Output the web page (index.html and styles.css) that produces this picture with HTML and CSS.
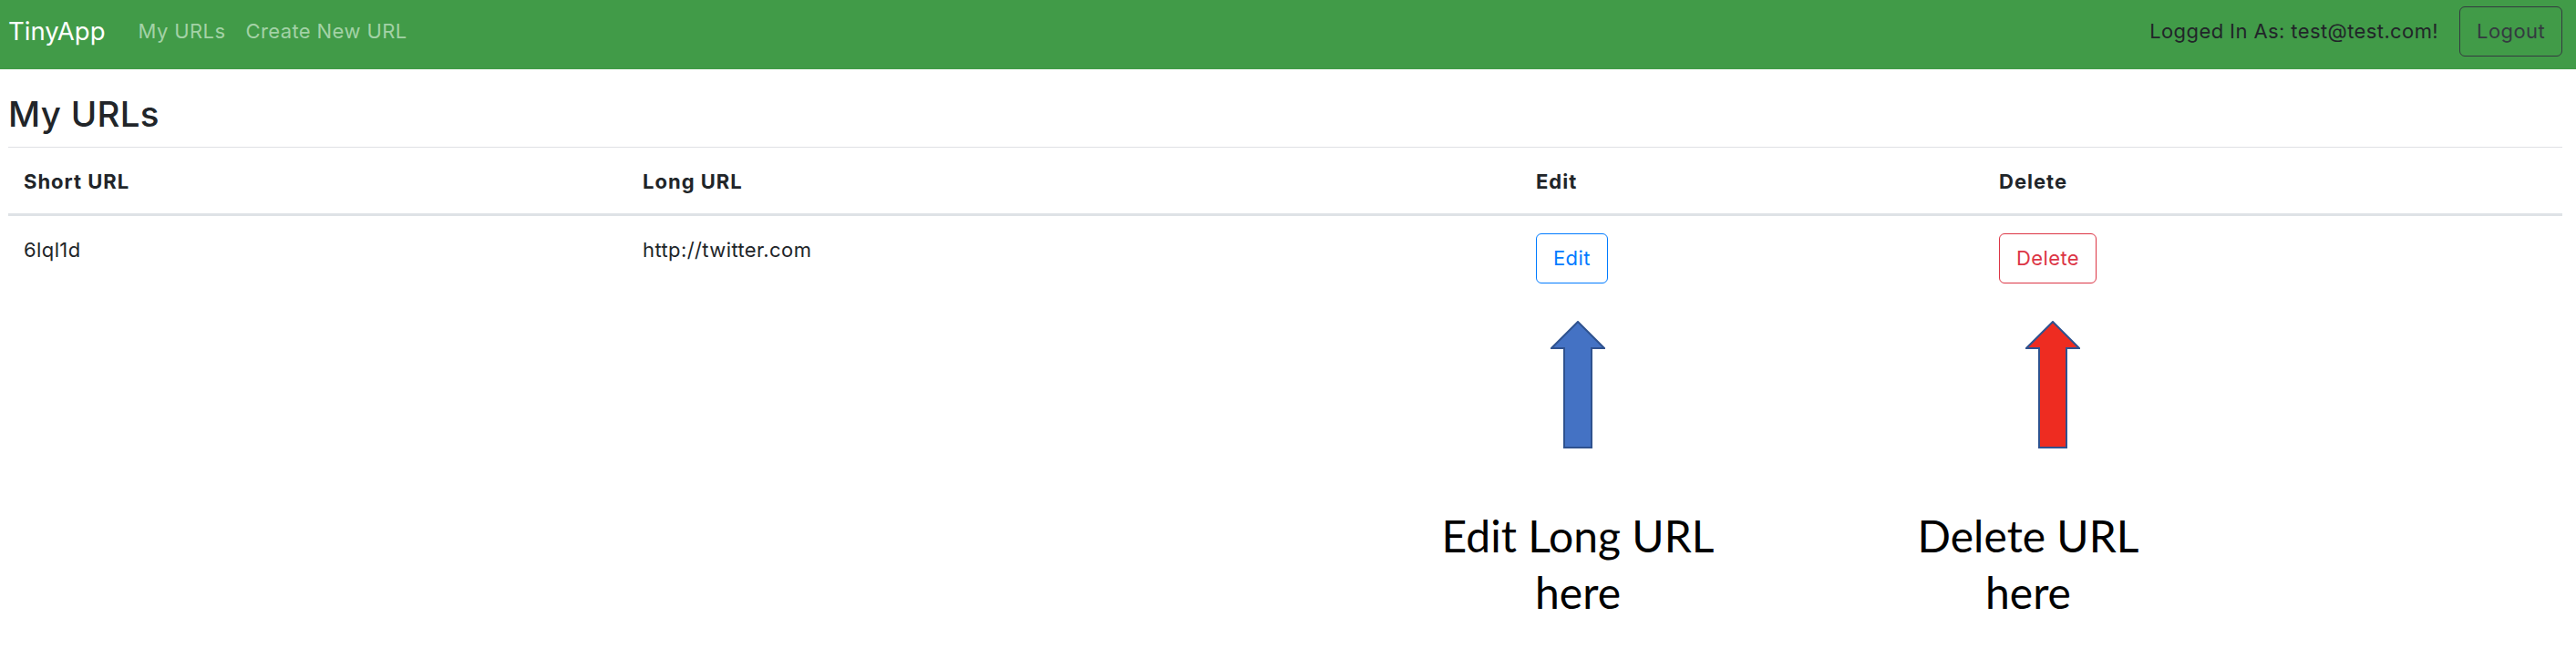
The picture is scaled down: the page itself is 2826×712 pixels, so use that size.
FILE: index.html
```html
<!DOCTYPE html>
<html lang="en">
<head>
<meta charset="utf-8">
<title>TinyApp - My URLs</title>
<link rel="stylesheet" href="styles.css">
</head>
<body>
<nav class="navbar">
  <a class="brand" href="#">TinyApp</a>
  <ul class="nav-links">
    <li><a class="nav-link" href="#">My URLs</a></li>
    <li><a class="nav-link" href="#">Create New URL</a></li>
  </ul>
  <div class="nav-right">
    <span class="nav-text">Logged In As: test@test.com!</span>
    <button class="btn btn-outline-dark">Logout</button>
  </div>
</nav>
<main class="main">
  <h3 class="page-title">My URLs</h3>
  <hr class="divider">
  <table class="url-table">
    <colgroup>
      <col class="c1"><col class="c2"><col class="c3"><col class="c4">
    </colgroup>
    <thead>
      <tr><th>Short URL</th><th>Long URL</th><th>Edit</th><th>Delete</th></tr>
    </thead>
    <tbody>
      <tr>
        <td>6lql1d</td>
        <td>http://twitter.com</td>
        <td class="btn-cell"><button class="btn btn-outline-primary">Edit</button></td>
        <td class="btn-cell"><button class="btn btn-outline-danger">Delete</button></td>
      </tr>
    </tbody>
  </table>
  <div class="annotations">
    <div class="note note-edit">
      <svg class="arrow" width="60" height="140" viewBox="0 0 60 140" aria-hidden="true">
        <polygon points="30,1 59,30 45,30 45,139 15,139 15,30 1,30" fill="#4472c4" stroke="#2f528f" stroke-width="2" stroke-linejoin="miter"/>
      </svg>
      <p class="note-text">Edit Long URL<br>here</p>
    </div>
    <div class="note note-delete">
      <svg class="arrow arrow-shift" width="60" height="140" viewBox="0 0 60 140" aria-hidden="true">
        <polygon points="30,1 59,30 45,30 45,139 15,139 15,30 1,30" fill="#ee2c21" stroke="#2f528f" stroke-width="2" stroke-linejoin="miter"/>
      </svg>
      <p class="note-text">Delete URL<br>here</p>
    </div>
  </div>
</main>
</body>
</html>
```

FILE: styles.css
```css
html, body {
  margin: 0;
  padding: 0;
  background: #ffffff;
}

body {
  font-family: Inter, "Liberation Sans", Arial, sans-serif;
  font-size: 22px;
  line-height: 1.5;
  letter-spacing: 0.4px;
  color: #212529;
}

/* Navbar */
.navbar {
  height: 76px;
  box-sizing: border-box;
  background: #419b48;
  display: flex;
  align-items: center;
  padding: 7px 15px 14px 9px;
}

.brand {
  font-size: 27.5px;
  line-height: 41px;
  letter-spacing: 0;
  color: #ffffff;
  text-decoration: none;
  margin-right: 25px;
}

.nav-links {
  list-style: none;
  margin: 0;
  padding: 0;
  display: flex;
}

.nav-link {
  display: block;
  padding: 0 11px;
  color: #a3d2a6;
  text-decoration: none;
}

.nav-right {
  margin-left: auto;
  display: flex;
  align-items: center;
  gap: 23px;
}

.nav-text {
  color: #212529;
}

/* Buttons */
.btn {
  font-family: inherit;
  font-size: 22px;
  line-height: 33px;
  letter-spacing: 0.4px;
  padding: 10px 18px;
  border-radius: 6px;
  background: transparent;
  border: 1.5px solid;
  cursor: pointer;
}

.btn-outline-dark {
  color: #343a40;
  border-color: #343a40;
  padding: 10px 18px;
}

.btn-outline-primary {
  color: #007bff;
  border-color: #007bff;
}

.btn-outline-danger {
  color: #dc3545;
  border-color: #dc3545;
}

/* Main */
.main {
  padding: 0 15px 0 9px;
}

.page-title {
  margin: 26px 0 0;
  font-size: 38.5px;
  line-height: 46px;
  font-weight: 500;
  letter-spacing: 0.3px;
}

.divider {
  margin: 13px 0 0;
  border: 0;
  border-top: 1.5px solid #dfe1e4;
}

.url-table {
  width: 100%;
  border-collapse: collapse;
  table-layout: fixed;
}

.c1 { width: 679px; }
.c2 { width: 980px; }
.c3 { width: 508px; }

.url-table th,
.url-table td {
  text-align: left;
  vertical-align: top;
  padding: 17px;
}

.url-table th {
  font-weight: 700;
  letter-spacing: 1px;
  border-bottom: 3px solid #dee2e6;
  padding-top: 21px;
  padding-bottom: 18px;
}

.url-table td {
  padding-top: 21px;
}

.url-table td.btn-cell {
  padding-top: 19px;
}

/* Annotations */
.annotations {
  display: flex;
  margin-top: 24px;
  padding-left: 1572px;
  gap: 194px;
}

.note {
  width: 300px;
  display: flex;
  flex-direction: column;
  align-items: center;
}

.arrow {
  display: block;
}

.arrow-shift {
  margin-left: 54px;
}

.note-text {
  margin: 65px 0 0;
  font-family: Lato, "Open Sans", sans-serif;
  font-size: 48px;
  line-height: 62px;
  letter-spacing: 0;
  color: #000000;
  text-align: center;
  white-space: nowrap;
}
```
